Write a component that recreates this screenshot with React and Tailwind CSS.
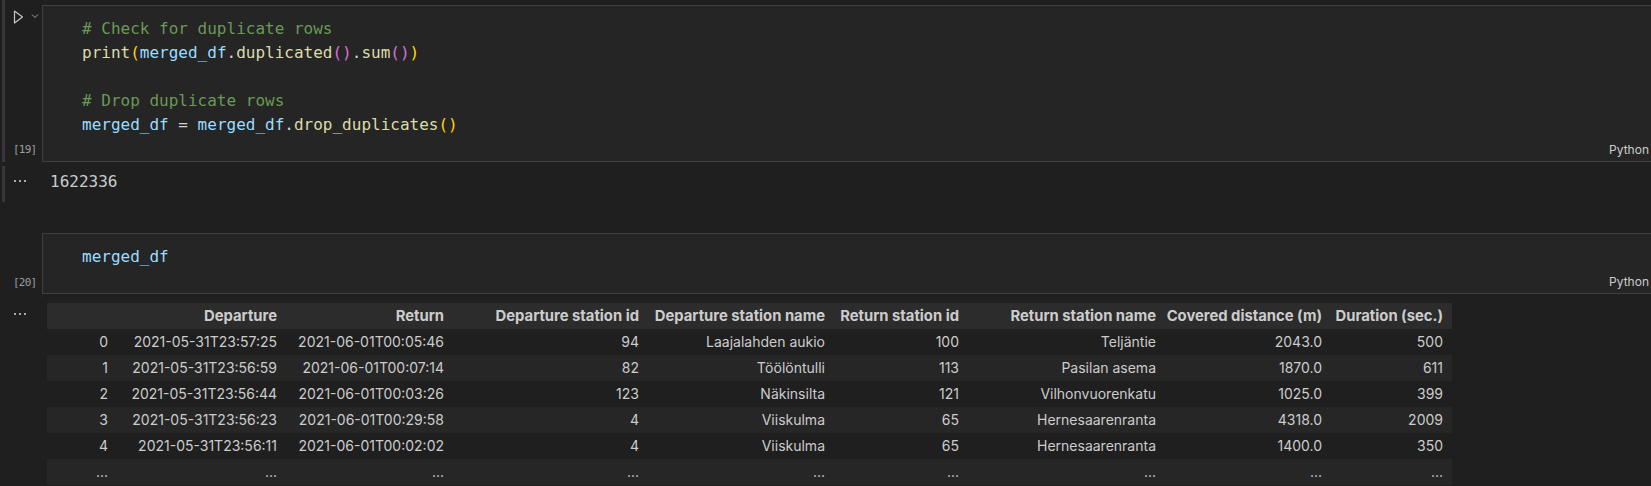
import React from "react";

const mono = { fontFamily: '"DejaVu Sans Mono", Menlo, monospace' };

const rows = [
  ["0", "2021-05-31T23:57:25", "2021-06-01T00:05:46", "94", "Laajalahden aukio", "100", "Teljäntie", "2043.0", "500"],
  ["1", "2021-05-31T23:56:59", "2021-06-01T00:07:14", "82", "Töölöntulli", "113", "Pasilan asema", "1870.0", "611"],
  ["2", "2021-05-31T23:56:44", "2021-06-01T00:03:26", "123", "Näkinsilta", "121", "Vilhonvuorenkatu", "1025.0", "399"],
  ["3", "2021-05-31T23:56:23", "2021-06-01T00:29:58", "4", "Viiskulma", "65", "Hernesaarenranta", "4318.0", "2009"],
  ["4", "2021-05-31T23:56:11", "2021-06-01T00:02:02", "4", "Viiskulma", "65", "Hernesaarenranta", "1400.0", "350"],
  ["...", "...", "...", "...", "...", "...", "...", "...", "..."],
];

const headers = [
  "",
  "Departure",
  "Return",
  "Departure station id",
  "Departure station name",
  "Return station id",
  "Return station name",
  "Covered distance (m)",
  "Duration (sec.)",
];

const Dots = () => (
  <div className="flex gap-[3px]">
    <span className="w-[2px] h-[2px] bg-[#a8a8a8]" />
    <span className="w-[2px] h-[2px] bg-[#a8a8a8]" />
    <span className="w-[2px] h-[2px] bg-[#a8a8a8]" />
  </div>
);

const Python = () => (
  <div className="mt-auto self-end pr-[2px] pb-[3px] text-[12px] leading-[16px] text-[#cccccc]">
    Python
  </div>
);

const Count = ({ n }) => (
  <div className="text-[11px] leading-[14px] text-[#9d9d9d] tracking-[-0.8px]" style={mono}>
    [{n}]
  </div>
);

const App = () => (
  <div
    className="w-[1651px] h-[486px] overflow-hidden bg-[#1f1f1f] text-[#cccccc]"
    style={{ fontFamily: 'Inter, "Liberation Sans", sans-serif' }}
  >
    {/* cell 19 */}
    <div className="flex h-[162px]">
      <div className="w-[42px] flex shrink-0">
        <div className="ml-[2px] w-[3px] bg-[#37373c]" />
        <div className="flex flex-col pl-[8px] pt-[10px] pb-[5px]">
          <div className="flex items-start gap-[7px]">
            <svg width="11" height="14" viewBox="0 0 11 14">
              <path d="M1.5 1 L9.5 7 L1.5 13 Z" fill="none" stroke="#c5c5c5" strokeWidth="1.2" strokeLinejoin="round" />
            </svg>
            <svg width="8" height="6" viewBox="0 0 8 6" className="mt-[3px]">
              <path d="M1 1.5 L4 4.5 L7 1.5" fill="none" stroke="#a0a0a0" strokeWidth="1" />
            </svg>
          </div>
          <div className="mt-auto">
            <Count n={19} />
          </div>
        </div>
      </div>
      <div className="flex-1 mt-[5px] flex flex-col border-y border-l border-[#3f3f3f] bg-[#252525] pl-[39px] pt-[11px]">
        <div className="text-[16px] leading-[24px]" style={mono}>
          <div className="text-[#6a9955]"># Check for duplicate rows</div>
          <div>
            <span className="text-[#dcdcaa]">print</span>
            <span className="text-[#ffd700]">(</span>
            <span className="text-[#9cdcfe]">merged_df</span>
            <span className="text-[#d4d4d4]">.</span>
            <span className="text-[#dcdcaa]">duplicated</span>
            <span className="text-[#da70d6]">()</span>
            <span className="text-[#d4d4d4]">.</span>
            <span className="text-[#dcdcaa]">sum</span>
            <span className="text-[#da70d6]">()</span>
            <span className="text-[#ffd700]">)</span>
          </div>
          <div className="h-[24px]" />
          <div className="text-[#6a9955]"># Drop duplicate rows</div>
          <div>
            <span className="text-[#9cdcfe]">merged_df</span>
            <span className="text-[#d4d4d4]"> = </span>
            <span className="text-[#9cdcfe]">merged_df</span>
            <span className="text-[#d4d4d4]">.</span>
            <span className="text-[#dcdcaa]">drop_duplicates</span>
            <span className="text-[#ffd700]">()</span>
          </div>
        </div>
        <Python />
      </div>
    </div>

    {/* output 19 */}
    <div className="flex h-[71px]">
      <div className="w-[42px] flex shrink-0">
        <div className="ml-[2px] mt-[4px] w-[3px] h-[36px] bg-[#37373c]" />
        <div className="pl-[9px] pt-[18px]">
          <Dots />
        </div>
      </div>
      <div className="pl-[8px] pt-[8px] text-[16px] leading-[24px] text-[#cccccc]" style={mono}>
        1622336
      </div>
    </div>

    {/* cell 20 */}
    <div className="flex h-[61px]">
      <div className="w-[42px] flex flex-col shrink-0 pl-[13px] pb-[4px]">
        <div className="mt-auto">
          <Count n={20} />
        </div>
      </div>
      <div className="flex-1 flex flex-col border-y border-l border-[#3f3f3f] bg-[#252525] pl-[39px] pt-[11px]">
        <div className="text-[16px] leading-[24px] text-[#9cdcfe]" style={mono}>
          merged_df
        </div>
        <Python />
      </div>
    </div>

    {/* output 20 */}
    <div className="flex">
      <div className="w-[42px] shrink-0 pl-[14px] pt-[19px]">
        <Dots />
      </div>
      <div className="pl-[5px] pt-[9px]">
        <table className="table-fixed w-[1405px] border-collapse text-[14px] text-[#cccccc]">
          <colgroup>
            <col className="w-[70px]" />
            <col className="w-[169px]" />
            <col className="w-[167px]" />
            <col className="w-[195px]" />
            <col className="w-[186px]" />
            <col className="w-[134px]" />
            <col className="w-[197px]" />
            <col className="w-[166px]" />
            <col className="w-[121px]" />
          </colgroup>
          <thead>
            <tr className="bg-[#2c2c2c] h-[26px]">
              {headers.map((h, i) => (
                <th key={i} className="text-right pr-[9px] text-[14.8px] font-bold leading-[26px] whitespace-nowrap">
                  {h}
                </th>
              ))}
            </tr>
          </thead>
          <tbody>
            {rows.map((r, i) => (
              <tr key={i} className={i % 2 === 1 ? "bg-[#262626] h-[26px]" : "h-[26px]"}>
                {r.map((c, j) => (
                  <td key={j} className="text-right pr-[9px] leading-[26px] whitespace-nowrap">
                    {c}
                  </td>
                ))}
              </tr>
            ))}
          </tbody>
        </table>
      </div>
    </div>
  </div>
);

export default App;
